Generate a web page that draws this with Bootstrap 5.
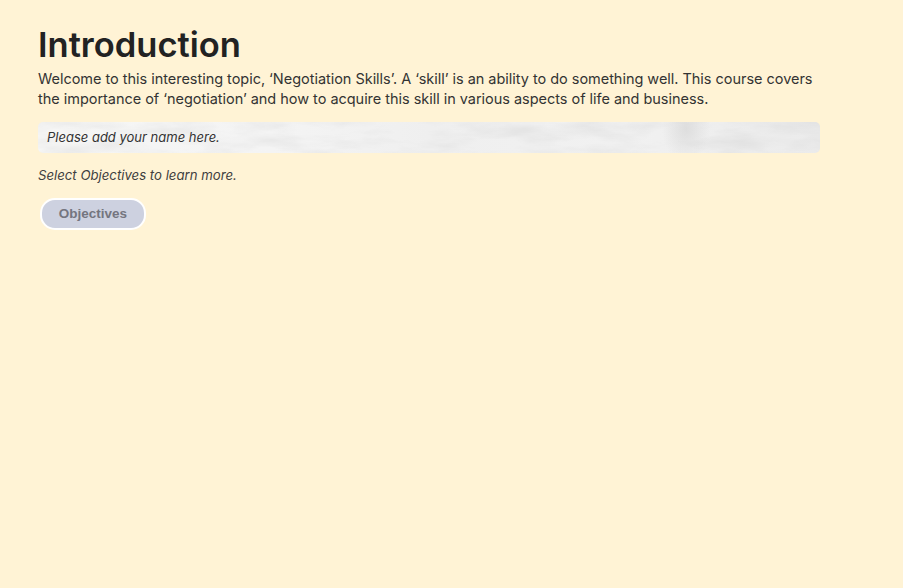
<!DOCTYPE html>
<html>
<head>
    <link href="https://cdn.jsdelivr.net/npm/bootstrap@5.3.0/dist/css/bootstrap.min.css" rel="stylesheet">
    <style>
        body {
            background: #fff3d5;
            font-family: Inter, "Noto Sans", sans-serif;
            color: #333;
        }

        .page-wrap {
            padding: 25px 0 0 38px;
            width: 820px;
        }

        .page-title {
            font-size: 34.5px;
            line-height: 40px;
            font-weight: 600;
            color: #222;
            margin: 0 0 4px;
        }

        .intro-text {
            font-size: 14.5px;
            letter-spacing: -.03px;
            line-height: 20px;
            margin: 0 0 13px;
        }

        .name-field {
            height: 31px;
            padding-left: 9px;
            font-size: 13px;
            font-style: italic;
            line-height: 31px;
            border-radius: 5px;
            color: #333;
            background:
                radial-gradient(ellipse 24px 34px at 648px 6px, rgba(195, 195, 195, .4), transparent),
                linear-gradient(90deg, #f6f6f5 0%, #f4f4f4 30%, #efefef 50%, #f1f1f1 75%, #ebebeb 100%);
        }

        .paper-grain {
            top: 0;
            left: 0;
            width: 100%;
            height: 100%;
        }

        .name-label {
            z-index: 1;
        }

        .hint-text {
            font-size: 13.2px;
            font-style: italic;
            line-height: 20px;
            margin: 12px 0 13px;
            color: #404040;
        }

        .obj-btn {
            margin-left: 2px;
            width: 106px;
            height: 32px;
            padding: 0;
            font-family: "Liberation Sans", sans-serif;
            font-size: 13.5px;
            font-weight: 700;
            color: #74757f;
            background: #cdd1e0;
            border: 2px solid #fff;
            border-radius: 15px;
        }
    </style>
</head>
<body>
    <div class="page-wrap">
        <h1 class="page-title">Introduction</h1>
        <p class="intro-text">Welcome to this interesting topic, ‘Negotiation Skills’. A ‘skill’ is an ability to do something well. This course covers the importance of ‘negotiation’ and how to acquire this skill in various aspects of life and business.</p>
        <div class="name-field position-relative overflow-hidden">
            <svg class="paper-grain position-absolute" aria-hidden="true">
                <filter id="paperNoise" x="0" y="0" width="100%" height="100%">
                    <feTurbulence type="fractalNoise" baseFrequency="0.015 0.06" numOctaves="5" seed="7"/>
                    <feColorMatrix values="0 0 0 0 .6  0 0 0 0 .6  0 0 0 0 .6  .7 0 0 0 -.29"/>
                </filter>
                <rect width="100%" height="100%" filter="url(#paperNoise)"/>
            </svg>
            <span class="name-label position-relative">Please add your name here.</span>
        </div>
        <p class="hint-text">Select Objectives to learn more.</p>
        <button type="button" class="btn obj-btn">Objectives</button>
    </div>
    <script src="https://cdn.jsdelivr.net/npm/bootstrap@5.3.0/dist/js/bootstrap.bundle.min.js"></script>
</body>
</html>
